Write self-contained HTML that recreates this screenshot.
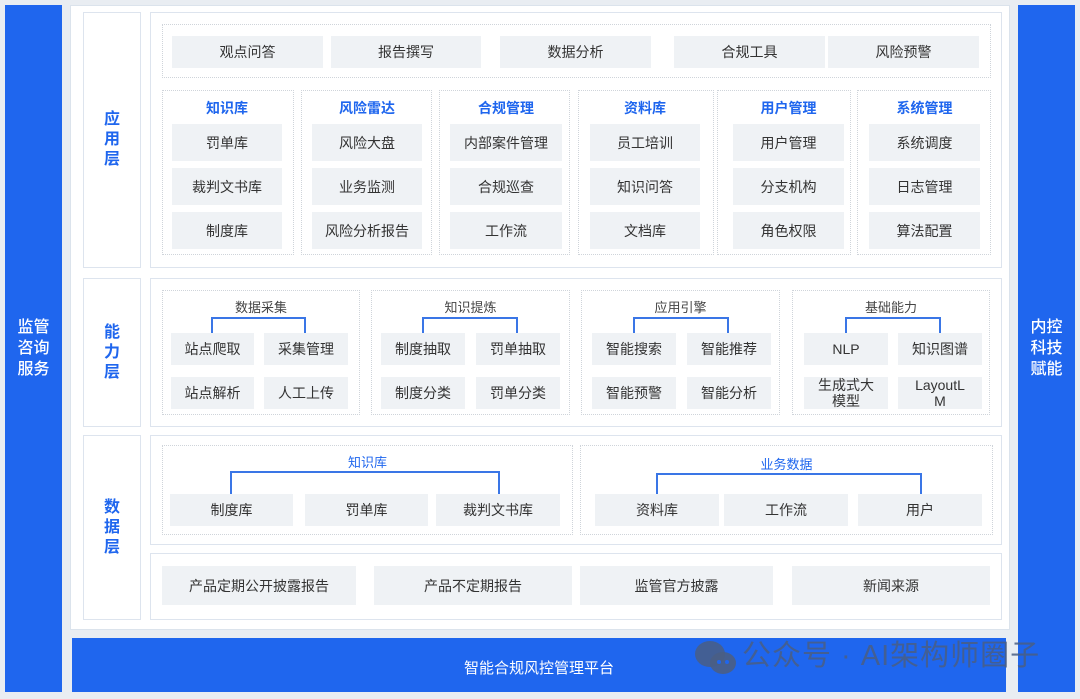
<!DOCTYPE html><html><head><meta charset="utf-8"><style>
*{margin:0;padding:0;box-sizing:border-box}
body{width:1080px;height:699px;background:#e9edf2;position:relative;overflow:hidden;font-family:"Liberation Sans","Noto Sans CJK SC",sans-serif;color:#333}
.a{position:absolute}
.blue{background:#1f66ee;color:#fff}
.side{display:flex;align-items:center;justify-content:center;text-align:center;font-size:16px;line-height:21px;font-weight:500}
.w{background:#fff;border:1px solid #dde4ee}
.lab{display:flex;align-items:center;justify-content:center;text-align:center;color:#1f66ee;font-weight:bold;font-size:16px;line-height:20px;width:58px}
.d{border:1px dotted #cfd4da}
.t{background:#eff2f5;display:flex;align-items:center;justify-content:center;text-align:center;font-size:14px;color:#333}
.h{font-size:14px;text-align:center;color:#1f66ee;font-weight:bold}
.h2{font-size:13px;text-align:center;color:#444}
.ln{border:2px solid #3a76e6;border-bottom:none}
</style></head><body>
<div class="a blue side" style="left:5px;top:5px;width:57px;height:687px">监管<br>咨询<br>服务</div>
<div class="a blue side" style="left:1018px;top:5px;width:57px;height:687px">内控<br>科技<br>赋能</div>
<div class="a" style="left:70px;top:5px;width:940px;height:625px;background:#fff;border:1px solid #dbe3ec"></div>
<div class="a blue" style="left:72px;top:638px;width:934px;height:54px;display:flex;align-items:center;justify-content:center;font-size:15px;padding-top:4px">智能合规风控管理平台</div>
<svg class="a" style="left:694px;top:640px" width="44" height="36" viewBox="0 0 44 36"><ellipse cx="16" cy="14" rx="15" ry="13" fill="#4a5e84" opacity=".85"/><ellipse cx="29" cy="23" rx="13" ry="11" fill="#4a5e84" opacity=".9"/><circle cx="25" cy="22" r="2" fill="#1f66ee"/><circle cx="33" cy="22" r="2" fill="#1f66ee"/></svg>
<div class="a" style="left:742px;top:637px;font-size:29px;color:#4a5e84;opacity:.85;line-height:38px;letter-spacing:1px">公众号 · AI架构师圈子</div>

<!-- app layer -->
<div class="a w lab" style="left:83px;top:12px;height:256px">应<br>用<br>层</div>
<div class="a w" style="left:150px;top:12px;width:852px;height:256px"></div>
<div class="a d" style="left:162px;top:24px;width:829px;height:54px"></div>
<div class="a t" style="left:172px;top:36px;width:151px;height:32px">观点问答</div>
<div class="a t" style="left:331px;top:36px;width:150px;height:32px">报告撰写</div>
<div class="a t" style="left:500px;top:36px;width:151px;height:32px">数据分析</div>
<div class="a t" style="left:674px;top:36px;width:151px;height:32px">合规工具</div>
<div class="a t" style="left:828px;top:36px;width:151px;height:32px">风险预警</div>

<div class="a d" style="left:162px;top:90px;width:132px;height:165px"></div>
<div class="a d" style="left:301px;top:90px;width:131px;height:165px"></div>
<div class="a d" style="left:439px;top:90px;width:131px;height:165px"></div>
<div class="a d" style="left:578px;top:90px;width:136px;height:165px"></div>
<div class="a d" style="left:717px;top:90px;width:134px;height:165px"></div>
<div class="a d" style="left:857px;top:90px;width:134px;height:165px"></div>

<div class="a h" style="left:172px;top:98px;width:110px">知识库</div>
<div class="a t" style="left:172px;top:124px;width:110px;height:37px">罚单库</div>
<div class="a t" style="left:172px;top:168px;width:110px;height:37px">裁判文书库</div>
<div class="a t" style="left:172px;top:212px;width:110px;height:37px">制度库</div>

<div class="a h" style="left:312px;top:98px;width:110px">风险雷达</div>
<div class="a t" style="left:312px;top:124px;width:110px;height:37px">风险大盘</div>
<div class="a t" style="left:312px;top:168px;width:110px;height:37px">业务监测</div>
<div class="a t" style="left:312px;top:212px;width:110px;height:37px">风险分析报告</div>

<div class="a h" style="left:450px;top:98px;width:112px">合规管理</div>
<div class="a t" style="left:450px;top:124px;width:112px;height:37px">内部案件管理</div>
<div class="a t" style="left:450px;top:168px;width:112px;height:37px">合规巡查</div>
<div class="a t" style="left:450px;top:212px;width:112px;height:37px">工作流</div>

<div class="a h" style="left:590px;top:98px;width:110px">资料库</div>
<div class="a t" style="left:590px;top:124px;width:110px;height:37px">员工培训</div>
<div class="a t" style="left:590px;top:168px;width:110px;height:37px">知识问答</div>
<div class="a t" style="left:590px;top:212px;width:110px;height:37px">文档库</div>

<div class="a h" style="left:733px;top:98px;width:111px">用户管理</div>
<div class="a t" style="left:733px;top:124px;width:111px;height:37px">用户管理</div>
<div class="a t" style="left:733px;top:168px;width:111px;height:37px">分支机构</div>
<div class="a t" style="left:733px;top:212px;width:111px;height:37px">角色权限</div>

<div class="a h" style="left:869px;top:98px;width:111px">系统管理</div>
<div class="a t" style="left:869px;top:124px;width:111px;height:37px">系统调度</div>
<div class="a t" style="left:869px;top:168px;width:111px;height:37px">日志管理</div>
<div class="a t" style="left:869px;top:212px;width:111px;height:37px">算法配置</div>

<!-- capability -->
<div class="a w lab" style="left:83px;top:278px;height:149px">能<br>力<br>层</div>
<div class="a w" style="left:150px;top:278px;width:852px;height:149px"></div>

<div class="a d" style="left:162px;top:290px;width:198px;height:125px"></div>
<div class="a h2" style="left:162px;top:297px;width:198px">数据采集</div>
<div class="a ln" style="left:211px;top:317px;width:95px;height:16px"></div>
<div class="a t" style="left:171px;top:333px;width:83px;height:32px">站点爬取</div>
<div class="a t" style="left:264px;top:333px;width:84px;height:32px">采集管理</div>
<div class="a t" style="left:171px;top:377px;width:83px;height:32px">站点解析</div>
<div class="a t" style="left:264px;top:377px;width:84px;height:32px">人工上传</div>

<div class="a d" style="left:371px;top:290px;width:199px;height:125px"></div>
<div class="a h2" style="left:371px;top:297px;width:199px">知识提炼</div>
<div class="a ln" style="left:422px;top:317px;width:96px;height:16px"></div>
<div class="a t" style="left:381px;top:333px;width:84px;height:32px">制度抽取</div>
<div class="a t" style="left:476px;top:333px;width:84px;height:32px">罚单抽取</div>
<div class="a t" style="left:381px;top:377px;width:84px;height:32px">制度分类</div>
<div class="a t" style="left:476px;top:377px;width:84px;height:32px">罚单分类</div>

<div class="a d" style="left:581px;top:290px;width:199px;height:125px"></div>
<div class="a h2" style="left:581px;top:297px;width:199px">应用引擎</div>
<div class="a ln" style="left:633px;top:317px;width:96px;height:16px"></div>
<div class="a t" style="left:592px;top:333px;width:84px;height:32px">智能搜索</div>
<div class="a t" style="left:687px;top:333px;width:84px;height:32px">智能推荐</div>
<div class="a t" style="left:592px;top:377px;width:84px;height:32px">智能预警</div>
<div class="a t" style="left:687px;top:377px;width:84px;height:32px">智能分析</div>

<div class="a d" style="left:792px;top:290px;width:198px;height:125px"></div>
<div class="a h2" style="left:792px;top:297px;width:198px">基础能力</div>
<div class="a ln" style="left:845px;top:317px;width:96px;height:16px"></div>
<div class="a t" style="left:804px;top:333px;width:84px;height:32px">NLP</div>
<div class="a t" style="left:898px;top:333px;width:84px;height:32px">知识图谱</div>
<div class="a t" style="left:804px;top:377px;width:84px;height:32px;line-height:16px">生成式大<br>模型</div>
<div class="a t" style="left:898px;top:377px;width:84px;height:32px;line-height:16px">LayoutL<br>M</div>

<!-- data -->
<div class="a w lab" style="left:83px;top:435px;height:185px">数<br>据<br>层</div>
<div class="a w" style="left:150px;top:435px;width:852px;height:110px"></div>
<div class="a d" style="left:162px;top:445px;width:411px;height:90px"></div>
<div class="a" style="left:162px;top:452px;width:411px;text-align:center;font-size:13px;color:#1f66ee">知识库</div>
<div class="a ln" style="left:230px;top:471px;width:270px;height:23px"></div>
<div class="a t" style="left:170px;top:494px;width:123px;height:32px">制度库</div>
<div class="a t" style="left:305px;top:494px;width:123px;height:32px">罚单库</div>
<div class="a t" style="left:436px;top:494px;width:124px;height:32px">裁判文书库</div>

<div class="a d" style="left:580px;top:445px;width:413px;height:90px"></div>
<div class="a" style="left:580px;top:454px;width:413px;text-align:center;font-size:13px;color:#1f66ee">业务数据</div>
<div class="a ln" style="left:656px;top:473px;width:266px;height:21px"></div>
<div class="a t" style="left:595px;top:494px;width:124px;height:32px">资料库</div>
<div class="a t" style="left:724px;top:494px;width:124px;height:32px">工作流</div>
<div class="a t" style="left:858px;top:494px;width:124px;height:32px">用户</div>

<div class="a w" style="left:150px;top:553px;width:852px;height:67px"></div>
<div class="a t" style="left:162px;top:566px;width:194px;height:39px">产品定期公开披露报告</div>
<div class="a t" style="left:374px;top:566px;width:198px;height:39px">产品不定期报告</div>
<div class="a t" style="left:580px;top:566px;width:193px;height:39px">监管官方披露</div>
<div class="a t" style="left:792px;top:566px;width:198px;height:39px">新闻来源</div>
</body></html>
